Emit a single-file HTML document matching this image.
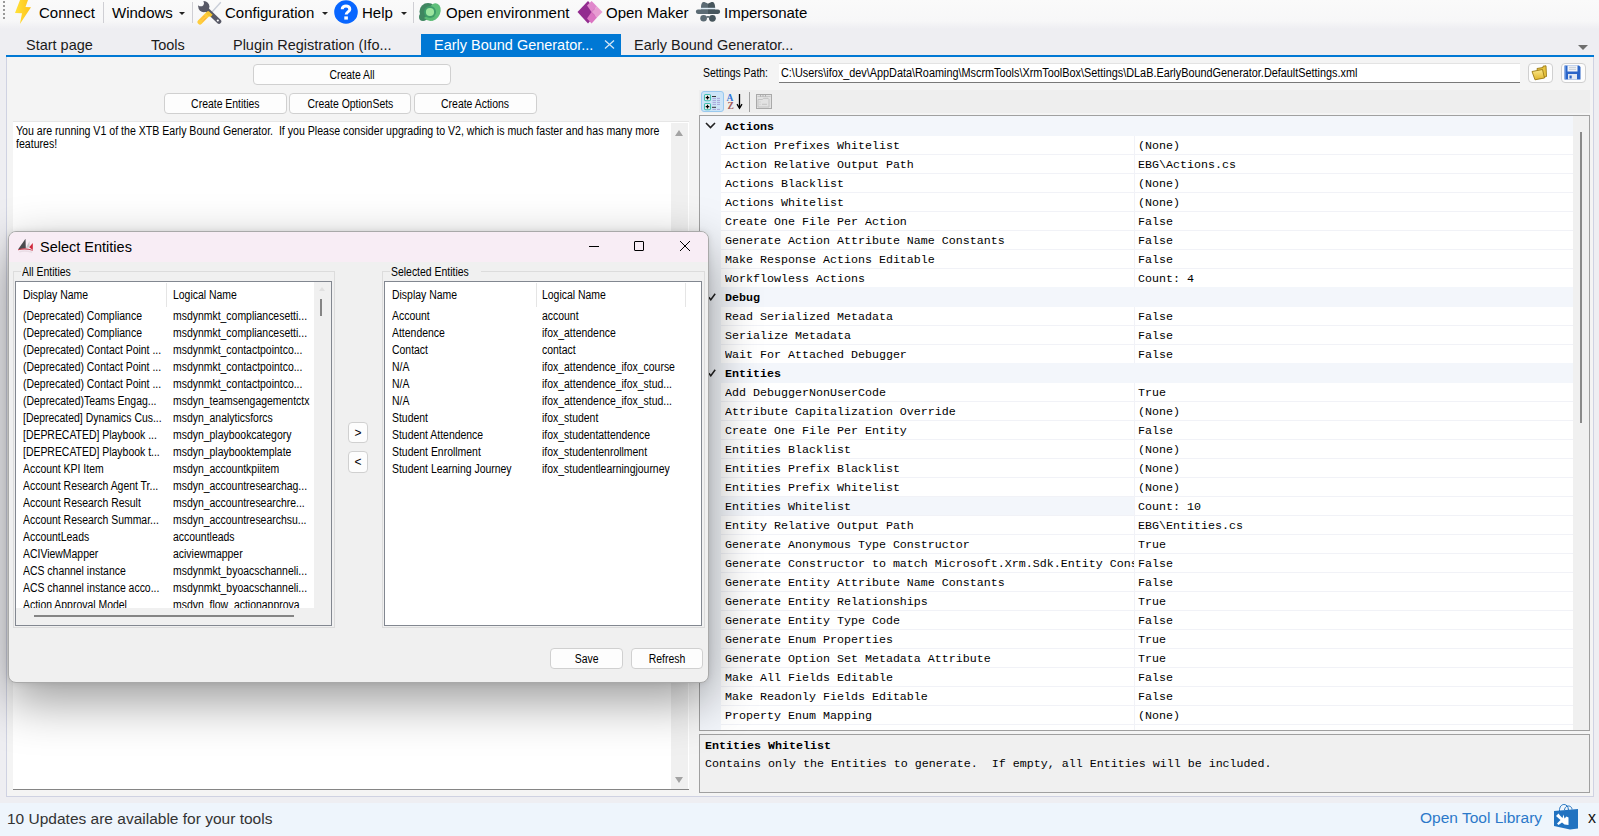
<!DOCTYPE html>
<html><head><meta charset="utf-8"><title>XrmToolBox</title>
<style>
*{box-sizing:border-box;margin:0;padding:0}
html,body{width:1599px;height:836px;overflow:hidden;background:#eeeef2;font-family:"Liberation Sans",sans-serif;color:#000;position:relative}
.abs{position:absolute}
#toolbar{left:0;top:0;width:1599px;height:29px;background:linear-gradient(#fafafa 0,#f7f7f8 72%,#eeeef2 100%)}
.tb{position:absolute;top:3px;font-size:15px;line-height:20px;color:#000;white-space:nowrap}
.sep{position:absolute;top:2px;width:1px;height:21px;background:#cfcfd4}
.dd{position:absolute;top:12px;width:0;height:0;border-left:3.5px solid transparent;border-right:3.5px solid transparent;border-top:3.5px solid #222}
#tabs{left:0;top:27px;width:1599px;height:28px;background:transparent}
.tab{position:absolute;top:8px;font-size:15px;line-height:20px;white-space:nowrap;color:#1a1a1a}
#blue{left:6px;top:55px;width:1588px;height:2px;background:#0078d4}
#panel{left:6px;top:57px;width:1588px;height:740px;background:#f4f4f4;border-left:1px solid #cfd2e2;border-right:1px solid #cfd2e2;border-bottom:1px solid #cfd2e2}
#status{left:0;top:803px;width:1599px;height:33px;background:#eef5fc}
.btn{position:absolute;padding-top:1px;background:#fdfdfd;border:1px solid #d0d0d0;border-radius:4px;font-size:12px;text-align:center;color:#000;white-space:nowrap}
.mono{font-family:"Liberation Mono",monospace}
#tbox{left:13px;top:121px;width:676px;height:669px;background:#fff;border-top:1px solid #e6e6e6;border-bottom:1px solid #858585}
#tbox .txt{position:absolute;left:3px;top:3px;width:745px;font-size:12px;transform:scaleX(.883);transform-origin:0 0;line-height:13px;color:#000}
#tscroll{left:658px;top:1px;width:17px;height:666px;background:#f0f0f0}
.tri-up{position:absolute;width:0;height:0;border-left:4px solid transparent;border-right:4px solid transparent;border-bottom:6px solid #a3a3a3}
.tri-dn{position:absolute;width:0;height:0;border-left:4px solid transparent;border-right:4px solid transparent;border-top:6px solid #a3a3a3}
#grid{left:699px;top:115px;width:891px;height:616px;background:#fff;border:1px solid #a0a0a0;overflow:hidden;font-family:"Liberation Mono",monospace;font-size:11.67px}
#gutter{left:0;top:0;width:21px;height:614px;background:#f3f6fb}
.gcat{left:0;width:873px;height:19px;background:#f3f6fb}
.gct{position:absolute;left:25px;top:1px;line-height:20px;font-weight:bold;white-space:nowrap}
.grow{left:21px;width:852px;height:19px;background:#fff;border-bottom:1px solid #f1f2f7}
.grow .gn{position:absolute;left:4px;top:0;line-height:20px;white-space:nowrap;width:409px;overflow:hidden}
.grow .gv{position:absolute;left:413px;top:0;height:18px;padding-left:3px;line-height:20px;white-space:nowrap;border-left:1px solid #f1f2f7}
#gscroll{left:873px;top:0;width:17px;height:614px;background:#f0f0f0}
#gthumb{left:7px;top:16px;width:2px;height:291px;background:#8a8a8a}
#desc{left:699px;top:734px;width:891px;height:59px;background:#f0f0f0;border:1px solid #a0a0a0;font-family:"Liberation Mono",monospace;font-size:11.67px}
.lv{font-size:12px}
.lhdr span{line-height:15px;white-space:nowrap}
.lrow{left:0;width:316px;height:17px;line-height:17px;white-space:nowrap}
.lrow .c1{position:absolute;left:7px;top:0}
.lrow .c2{position:absolute;top:0}

.n{display:inline-block;transform:scaleX(.87);transform-origin:0 50%;white-space:nowrap}
.nc{display:inline-block;transform:scaleX(.87);transform-origin:50% 50%;white-space:nowrap}
.lrow .c1,.lrow .c2,.lhdr span{transform:scaleX(.87);transform-origin:0 50%}
.tab{transform:scaleX(.965);transform-origin:0 50%}

.grow.sel{background:linear-gradient(90deg,#f3f6fb 0,#f3f6fb 413px,#fff 413px)}

</style></head><body>

<div id="toolbar" class="abs">
  <div class="abs" style="left:3px;top:1px;width:2px;height:19px;background:repeating-linear-gradient(#999 0 2px,transparent 2px 4px)"></div>
  <svg class="abs" style="left:14px;top:0" width="18" height="25" viewBox="14 0 18 25"><defs><linearGradient id="lg1" x1="0" x2="1"><stop offset="0" stop-color="#ffe23a"/><stop offset="1" stop-color="#ffc21a"/></linearGradient></defs><path d="M20 0 L28 0 L25.5 7 L31 7.3 L19.9 24 L22 13.3 L15 13 Z" fill="url(#lg1)"/></svg>
  <div class="tb" style="left:39px">Connect</div>
  <div class="sep" style="left:103px"></div>
  <div class="tb" style="left:112px">Windows</div>
  <div class="dd" style="left:179px"></div>
  <div class="sep" style="left:192px"></div>
  <svg class="abs" style="left:196px;top:0" width="26" height="25" viewBox="196 0 26 25">
    <path d="M212 12 L220.8 2.3" stroke="#c9ced8" stroke-width="1.4"/>
    <path d="M206 9 L219 21.5" stroke="#575866" stroke-width="4.6" stroke-linecap="round"/>
    <circle cx="203.8" cy="6.6" r="5.6" fill="#575866"/>
    <circle cx="200.8" cy="3.2" r="3.1" fill="#fafafb"/>
    <path d="M197 0 L203.5 0 L201 3 Z" fill="#fafafb"/>
    <circle cx="217.8" cy="20.5" r="1.1" fill="#fff"/>
    <path d="M200 22 L208 14" stroke="#ffcd3c" stroke-width="5" stroke-linecap="round"/>
    <path d="M207.5 12.5 L211.5 16" stroke="#f3c430" stroke-width="3.4"/>
    <path d="M201 19.5 L205 15.5 M202.8 21.3 L206.8 17.3" stroke="#ff8a45" stroke-width="0.9" stroke-dasharray="1 0.8"/>
  </svg>
  <div class="tb" style="left:225px">Configuration</div>
  <div class="dd" style="left:322px"></div>
  <svg class="abs" style="left:334px;top:0" width="24" height="24" viewBox="0 0 24 24"><circle cx="12" cy="12" r="11.8" fill="#0866ff"/><path d="M8.2 9.2 C8.2 4.8 15.8 4.8 15.8 9.2 C15.8 11.8 12.2 12 12.2 14.6" fill="none" stroke="#fff" stroke-width="3"/><rect x="10.3" y="16.4" width="3.6" height="3.2" fill="#fff"/></svg>
  <div class="tb" style="left:362px">Help</div>
  <div class="dd" style="left:401px"></div>
  <div class="sep" style="left:413px"></div>
  <svg class="abs" style="left:416px;top:0" width="28" height="24" viewBox="416 0 28 24"><circle cx="428" cy="11.5" r="8.5" fill="#3f8660"/><circle cx="423" cy="17" r="4" fill="#3f8660"/><ellipse cx="434" cy="12" rx="6.3" ry="9" transform="rotate(22 434 12)" fill="#5fbf7a"/><path d="M424 18 Q428 22 433 20.5 L436 16 L428 15 Z" fill="#5aba74"/><circle cx="430" cy="12" r="6" fill="#3e9d69"/><circle cx="430" cy="12" r="4.1" fill="#9de69f"/></svg>
  <div class="tb" style="left:446px">Open environment</div>
  <svg class="abs" style="left:576px;top:0" width="28" height="25" viewBox="576 0 28 25"><path d="M588 1 L577.5 12 L588 23.5 L598 12 Z" fill="#922c8f"/><path d="M587 5.5 L591.6 1 L597 6.5 L591.5 12 Z" fill="#e088cc"/><path d="M597 6.5 L602.5 12 L597 17.5 L591.5 12 Z" fill="#e89cd2"/><path d="M591.5 12 L597 17.5 L591.6 23.5 L587 18.5 Z" fill="#db74c2"/></svg>
  <div class="tb" style="left:606px">Open Maker</div>
  <svg class="abs" style="left:694px;top:0" width="28" height="24" viewBox="694 0 28 24"><defs><linearGradient id="spy" x1="0" x2="1"><stop offset="0.5" stop-color="#5b6b74"/><stop offset="0.5" stop-color="#47565d"/></linearGradient></defs><path d="M701 8 C701 2 703 1.8 705 2.2 C706.5 2.6 707.3 3.6 708 3.6 C708.7 3.6 709.5 2.6 711 2.2 C713 1.8 715 2 715.2 8 Z" fill="url(#spy)"/><rect x="700.6" y="7.8" width="14.8" height="1.8" fill="#dcebf6"/><path d="M698 9.6 L701 9.6 L701 9.3 L715 9.3 L715 9.6 L718 9.6 A2.1 2.1 0 0 1 718 13.9 L698 13.9 A2.1 2.1 0 0 1 698 9.6 Z" fill="url(#spy)"/><circle cx="703.6" cy="18.3" r="3.3" fill="#5b6b74"/><circle cx="712.4" cy="18.3" r="3.4" fill="#47565d"/><path d="M706.5 17.3 Q708 16.3 709.5 17.3" stroke="#505f66" stroke-width="1.4" fill="none"/></svg>
  <div class="tb" style="left:724px">Impersonate</div>
</div>
<div id="tabs" class="abs">
  <div class="tab" style="left:26px">Start page</div>
  <div class="tab" style="left:151px">Tools</div>
  <div class="tab" style="left:233px">Plugin Registration (Ifo...</div>
  <div class="abs" style="left:421px;top:7px;width:200px;height:21px;background:#0078d4"></div>
  <div class="tab" style="left:434px;color:#fff">Early Bound Generator...</div>
  <svg class="abs" style="left:604px;top:13px" width="11" height="9" viewBox="0 0 11 9"><path d="M1 0.5 L10 8.5 M10 0.5 L1 8.5" stroke="#d4e6f6" stroke-width="1.3"/></svg>
  <div class="tab" style="left:634px">Early Bound Generator...</div>
  <div class="abs" style="left:1578px;top:18px;width:0;height:0;border-left:5px solid transparent;border-right:5px solid transparent;border-top:5px solid #6e6e6e"></div>
</div>
<div id="blue" class="abs"></div>
<div id="panel" class="abs"></div>
<div class="btn" style="left:253px;top:64px;width:198px;height:21px;line-height:19px"><span class="nc">Create All</span></div>
<div class="btn" style="left:164px;top:93px;width:123px;height:21px;line-height:19px"><span class="nc">Create Entities</span></div>
<div class="btn" style="left:289px;top:93px;width:122px;height:21px;line-height:19px"><span class="nc">Create OptionSets</span></div>
<div class="btn" style="left:414px;top:93px;width:123px;height:21px;line-height:19px"><span class="nc">Create Actions</span></div>
<div id="tbox" class="abs">
  <div class="txt">You are running V1 of the XTB Early Bound Generator.&nbsp; If you Please consider upgrading to V2, which is much faster and has many more features!</div>
  <div id="tscroll" class="abs"><div class="tri-up" style="left:4px;top:7px"></div><div class="tri-dn" style="left:4px;top:654px"></div></div>
</div>
<div class="abs n" style="left:703px;top:66px;font-size:12px;line-height:15px">Settings Path:</div>
<div class="abs" style="left:779px;top:63px;width:741px;height:20px;background:#fff;border-top:1px solid #e3e3e3;border-bottom:1px solid #7a7a7a;font-size:12px;line-height:18px;padding-left:2px;white-space:nowrap;overflow:hidden"><span class="n" style="transform:scaleX(.905)">C:\Users\ifox_dev\AppData\Roaming\MscrmTools\XrmToolBox\Settings\DLaB.EarlyBoundGenerator.DefaultSettings.xml</span></div>
<div class="btn" style="left:1528px;top:63px;width:25px;height:20px"></div>
<svg class="abs" style="left:1531px;top:65px" width="18" height="16" viewBox="0 0 18 16"><defs><linearGradient id="fg" x1="0" y1="0" x2="0" y2="1"><stop offset="0" stop-color="#fbe88a"/><stop offset="1" stop-color="#e0b52a"/></linearGradient></defs><path d="M6 3.5 L12 2.5 L12 1.2 L15 0.8 L15.5 11.5 L8 13.5 Z" fill="#e8c440" stroke="#9c7a14" stroke-width="0.9"/><path d="M1 6.5 L11.5 4.5 L13.5 13 L4 14.8 Z" fill="url(#fg)" stroke="#9c7a14" stroke-width="0.9"/></svg>
<div class="btn" style="left:1561px;top:63px;width:25px;height:20px"></div>
<svg class="abs" style="left:1564px;top:65px" width="17" height="15" viewBox="0 0 17 15"><path d="M0.5 0.5 H15 L16.5 2 V14.5 H0.5 Z" fill="#2a64c8"/><path d="M1.5 1 V14" stroke="#5a8ee0" stroke-width="1"/><rect x="3.5" y="0.5" width="10" height="6" fill="#f2f4f8"/><path d="M5 2.3H12M5 4.3H12" stroke="#b8c0cc" stroke-width="0.8"/><rect x="4" y="9" width="9" height="5.5" fill="#e2e8f2"/><rect x="5.5" y="10.5" width="2.2" height="3" fill="#2a64c8"/></svg>
<div class="abs" style="left:699px;top:90px;width:891px;height:23px;background:#eeeeee"></div>
<div class="abs" style="left:701px;top:91px;width:23px;height:21px;background:#cce4f7;border:1px solid #99c9ef;border-radius:3px"></div>
<svg class="abs" style="left:703px;top:93px" width="20" height="18" viewBox="703 93 20 18">
  <rect x="704.5" y="94.5" width="6" height="6.2" rx="1.2" fill="#f4f4f4" stroke="#43bfae" stroke-width="1.1"/><path d="M707.5 95.8V99.4M705.7 97.6H709.3" stroke="#000" stroke-width="1.3"/>
  <rect x="704.5" y="103.5" width="6" height="6.2" rx="1.2" fill="#f4f4f4" stroke="#43bfae" stroke-width="1.1"/><path d="M707.5 104.8V108.4M705.7 106.6H709.3" stroke="#000" stroke-width="1.3"/>
  <path d="M712 96.5H716M712 107.3H716" stroke="#333" stroke-width="1"/>
  <path d="M712.5 98.4H716M717 98.4H720M712.5 100.4H716M717 100.4H720M712.5 102.4H716M717 102.4H720M712.5 104.4H716M717 104.4H720M712.5 109.4H716M717 109.4H720" stroke="#9a8cd0" stroke-width="0.7"/>
</svg>
<svg class="abs" style="left:726px;top:93px" width="20" height="18" viewBox="726 93 20 18"><text x="726.6" y="101.2" font-family="Liberation Serif" font-weight="bold" font-size="9.5" fill="#2e74d8">A</text><text x="727.4" y="109.4" font-family="Liberation Serif" font-weight="bold" font-size="9.5" fill="#a05a5a">Z</text><path d="M739.5 94V108" stroke="#000" stroke-width="1.3"/><path d="M737 104.2L739.5 108.2L742 104.2" stroke="#000" stroke-width="1.3" fill="none"/></svg>
<div class="abs" style="left:749px;top:92px;width:1px;height:20px;background:#a0a0a0"></div>
<svg class="abs" style="left:755px;top:93px" width="18" height="17" viewBox="755 93 18 17"><rect x="756.5" y="94.5" width="15" height="14" fill="#e2e2e2" stroke="#a9a9a9"/><path d="M757.5 96.5H770.5" stroke="#c8c8c8"/><path d="M760 95.8H761M762.5 95.8H763.5M765 95.8H766" stroke="#888" stroke-width="0.8"/><path d="M758 107V99.5H762.5L763.5 98.3H768L769 99.5V107Z" fill="none" stroke="#c4c4c4"/><path d="M759.5 102H760.5M759.5 104.3H760.5M762 104.3H767" stroke="#bdbdbd" stroke-width="0.8"/></svg>

<div id="grid" class="abs">
<div id="gutter" class="abs"></div>
<div class="gcat abs" style="top:0px;height:20px"><svg class="abs" style="left:5px;top:6px" width="11" height="7" viewBox="0 0 11 7"><path d="M1 1 L5.5 5.5 L10 1" fill="none" stroke="#222" stroke-width="1.6"/></svg><span class="gct">Actions</span></div>
<div class="grow abs" style="top:20px"><span class="gn">Action Prefixes Whitelist</span><span class="gv">(None)</span></div>
<div class="grow abs" style="top:39px"><span class="gn">Action Relative Output Path</span><span class="gv">EBG\Actions.cs</span></div>
<div class="grow abs" style="top:58px"><span class="gn">Actions Blacklist</span><span class="gv">(None)</span></div>
<div class="grow abs" style="top:77px"><span class="gn">Actions Whitelist</span><span class="gv">(None)</span></div>
<div class="grow abs" style="top:96px"><span class="gn">Create One File Per Action</span><span class="gv">False</span></div>
<div class="grow abs" style="top:115px"><span class="gn">Generate Action Attribute Name Constants</span><span class="gv">False</span></div>
<div class="grow abs" style="top:134px"><span class="gn">Make Response Actions Editable</span><span class="gv">False</span></div>
<div class="grow abs" style="top:153px"><span class="gn">Workflowless Actions</span><span class="gv">Count: 4</span></div>
<div class="gcat abs" style="top:171px;height:20px"><svg class="abs" style="left:8px;top:6px" width="8" height="8" viewBox="0 0 8 8"><path d="M0.8 4.2 L2.8 6.8 L7.2 0.8" fill="none" stroke="#222" stroke-width="1.5"/></svg><span class="gct">Debug</span></div>
<div class="grow abs" style="top:191px"><span class="gn">Read Serialized Metadata</span><span class="gv">False</span></div>
<div class="grow abs" style="top:210px"><span class="gn">Serialize Metadata</span><span class="gv">False</span></div>
<div class="grow abs" style="top:229px"><span class="gn">Wait For Attached Debugger</span><span class="gv">False</span></div>
<div class="gcat abs" style="top:247px;height:20px"><svg class="abs" style="left:8px;top:6px" width="8" height="8" viewBox="0 0 8 8"><path d="M0.8 4.2 L2.8 6.8 L7.2 0.8" fill="none" stroke="#222" stroke-width="1.5"/></svg><span class="gct">Entities</span></div>
<div class="grow abs" style="top:267px"><span class="gn">Add DebuggerNonUserCode</span><span class="gv">True</span></div>
<div class="grow abs" style="top:286px"><span class="gn">Attribute Capitalization Override</span><span class="gv">(None)</span></div>
<div class="grow abs" style="top:305px"><span class="gn">Create One File Per Entity</span><span class="gv">False</span></div>
<div class="grow abs" style="top:324px"><span class="gn">Entities Blacklist</span><span class="gv">(None)</span></div>
<div class="grow abs" style="top:343px"><span class="gn">Entities Prefix Blacklist</span><span class="gv">(None)</span></div>
<div class="grow abs" style="top:362px"><span class="gn">Entities Prefix Whitelist</span><span class="gv">(None)</span></div>
<div class="grow sel abs" style="top:381px"><span class="gn">Entities Whitelist</span><span class="gv">Count: 10</span></div>
<div class="grow abs" style="top:400px"><span class="gn">Entity Relative Output Path</span><span class="gv">EBG\Entities.cs</span></div>
<div class="grow abs" style="top:419px"><span class="gn">Generate Anonymous Type Constructor</span><span class="gv">True</span></div>
<div class="grow abs" style="top:438px"><span class="gn">Generate Constructor to match Microsoft.Xrm.Sdk.Entity Constructor</span><span class="gv">False</span></div>
<div class="grow abs" style="top:457px"><span class="gn">Generate Entity Attribute Name Constants</span><span class="gv">False</span></div>
<div class="grow abs" style="top:476px"><span class="gn">Generate Entity Relationships</span><span class="gv">True</span></div>
<div class="grow abs" style="top:495px"><span class="gn">Generate Entity Type Code</span><span class="gv">False</span></div>
<div class="grow abs" style="top:514px"><span class="gn">Generate Enum Properties</span><span class="gv">True</span></div>
<div class="grow abs" style="top:533px"><span class="gn">Generate Option Set Metadata Attribute</span><span class="gv">True</span></div>
<div class="grow abs" style="top:552px"><span class="gn">Make All Fields Editable</span><span class="gv">False</span></div>
<div class="grow abs" style="top:571px"><span class="gn">Make Readonly Fields Editable</span><span class="gv">False</span></div>
<div class="grow abs" style="top:590px"><span class="gn">Property Enum Mapping</span><span class="gv">(None)</span></div>
<div class="grow abs" style="top:609px"><span class="gn">Replace Option Set Properties with Enum</span><span class="gv">True</span></div>
<div id="gscroll" class="abs"><div id="gthumb" class="abs"></div></div>
</div>
<div id="desc" class="abs">
  <div class="abs" style="left:5px;top:2px;font-weight:bold;line-height:18px">Entities Whitelist</div>
  <div class="abs" style="left:5px;top:20px;line-height:18px;white-space:pre">Contains only the Entities to generate.  If empty, all Entities will be included.</div>
</div>
<div id="status" class="abs">
  <div class="abs" style="left:7px;top:6px;font-size:15.5px;line-height:20px;color:#333">10 Updates are available for your tools</div>
  <div class="abs" style="left:1420px;top:5px;font-size:15.5px;line-height:20px;color:#2b79c9">Open Tool Library</div>
  <svg class="abs" style="left:1553px;top:0" width="26" height="30" viewBox="1553 803 26 30"><path d="M1559.5 811 C1559 803 1568 802 1568.5 810 M1564.5 810 C1565 804.5 1572 805 1572 809.5" fill="none" stroke="#2172c0" stroke-width="1"/><path d="M1554 811 L1578 809 L1578 828.5 L1570 829.5 L1554 826 Z" fill="#2172c0"/><path d="M1556 816 L1558.5 813.5 L1560 815.5 L1562.5 818 L1563.5 814.5 L1564.5 818.5 L1566.5 816.5 L1568.5 817.5 L1568.5 825 L1564.5 824.5 L1562 822.5 L1558.5 825 L1557 823.5 L1560.5 820 Z" fill="#fff"/></svg>
  <div class="abs" style="left:1588px;top:5px;font-size:16px;line-height:20px;color:#111">x</div>
</div>

<div id="dlg" class="abs" style="left:8px;top:231px;width:701px;height:452px;background:#f0f0f0;border:1px solid #a9a9a9;border-radius:8px;box-shadow:0 18px 50px rgba(0,0,0,0.40),0 0 6px rgba(0,0,0,0.10);overflow:hidden">
  <div class="abs" style="left:0;top:0;width:699px;height:30px;background:#f8edf5"></div>
  <svg class="abs" style="left:8px;top:6px" width="17" height="17" viewBox="0 0 17 17"><path d="M1 11.5 L8.5 0.7 L8.8 10.2 Z" fill="#4a4a4e"/><path d="M8.8 10.2 L12.5 3 L12.5 9.3 Z" fill="#c9c9cc"/><path d="M12.2 9.3 L15.8 4.9 L15.8 12 Z" fill="#d0283c"/><path d="M1 11.5 Q8 9 15.8 12 L15.8 12.8 Q8 10.3 1 12.3 Z" fill="#c23848"/><path d="M2 13 Q8 11.5 15.5 13.5 L15 15 Q8 13 2.5 14.5Z" fill="#e2d6de" opacity=".7"/></svg>
  <div class="abs" style="left:31px;top:5px;font-size:14.5px;line-height:20px;color:#000">Select Entities</div>
  <div class="abs" style="left:580px;top:14px;width:10px;height:1px;background:#000"></div>
  <div class="abs" style="left:625px;top:9px;width:10px;height:10px;border:1px solid #000;border-radius:1px"></div>
  <svg class="abs" style="left:671px;top:9px" width="10" height="10" viewBox="0 0 10 10"><path d="M0 0L10 10M10 0L0 10" stroke="#000" stroke-width="1"/></svg>
  <div class="abs" style="left:4px;top:39px;width:322px;height:357px;border:1px solid #dcdcdc"></div>
  <div class="abs" style="left:12px;top:33px;padding:0 1px;background:#f0f0f0;font-size:12px;line-height:15px"><span class="n">All Entities</span></div>
  <div class="abs lv" style="left:6px;top:49px;width:317px;height:345px;background:#fff;border:1px solid #828790">
    <div class="lhdr abs" style="left:0;top:1px;width:300px;height:25px"><span class="abs" style="left:7px;top:5px">Display Name</span><div class="abs" style="left:150px;top:0;width:1px;height:24px;background:#e5e5e5"></div><span class="abs" style="left:157px;top:5px">Logical Name</span></div>
    <div class="abs" style="left:0;top:0;width:298px;height:326px;overflow:hidden">
<div class="lrow abs" style="top:26px"><span class="c1">(Deprecated) Compliance</span><span class="c2" style="left:157px">msdynmkt_compliancesetti...</span></div>
<div class="lrow abs" style="top:43px"><span class="c1">(Deprecated) Compliance</span><span class="c2" style="left:157px">msdynmkt_compliancesetti...</span></div>
<div class="lrow abs" style="top:60px"><span class="c1">(Deprecated) Contact Point ...</span><span class="c2" style="left:157px">msdynmkt_contactpointco...</span></div>
<div class="lrow abs" style="top:77px"><span class="c1">(Deprecated) Contact Point ...</span><span class="c2" style="left:157px">msdynmkt_contactpointco...</span></div>
<div class="lrow abs" style="top:94px"><span class="c1">(Deprecated) Contact Point ...</span><span class="c2" style="left:157px">msdynmkt_contactpointco...</span></div>
<div class="lrow abs" style="top:111px"><span class="c1">(Deprecated)Teams Engag...</span><span class="c2" style="left:157px">msdyn_teamsengagementctx</span></div>
<div class="lrow abs" style="top:128px"><span class="c1">[Deprecated] Dynamics Cus...</span><span class="c2" style="left:157px">msdyn_analyticsforcs</span></div>
<div class="lrow abs" style="top:145px"><span class="c1">[DEPRECATED] Playbook ...</span><span class="c2" style="left:157px">msdyn_playbookcategory</span></div>
<div class="lrow abs" style="top:162px"><span class="c1">[DEPRECATED] Playbook t...</span><span class="c2" style="left:157px">msdyn_playbooktemplate</span></div>
<div class="lrow abs" style="top:179px"><span class="c1">Account KPI Item</span><span class="c2" style="left:157px">msdyn_accountkpiitem</span></div>
<div class="lrow abs" style="top:196px"><span class="c1">Account Research Agent Tr...</span><span class="c2" style="left:157px">msdyn_accountresearchag...</span></div>
<div class="lrow abs" style="top:213px"><span class="c1">Account Research Result</span><span class="c2" style="left:157px">msdyn_accountresearchre...</span></div>
<div class="lrow abs" style="top:230px"><span class="c1">Account Research Summar...</span><span class="c2" style="left:157px">msdyn_accountresearchsu...</span></div>
<div class="lrow abs" style="top:247px"><span class="c1">AccountLeads</span><span class="c2" style="left:157px">accountleads</span></div>
<div class="lrow abs" style="top:264px"><span class="c1">ACIViewMapper</span><span class="c2" style="left:157px">aciviewmapper</span></div>
<div class="lrow abs" style="top:281px"><span class="c1">ACS channel instance</span><span class="c2" style="left:157px">msdynmkt_byoacschanneli...</span></div>
<div class="lrow abs" style="top:298px"><span class="c1">ACS channel instance acco...</span><span class="c2" style="left:157px">msdynmkt_byoacschanneli...</span></div>
<div class="lrow abs" style="top:315px"><span class="c1">Action Approval Model</span><span class="c2" style="left:157px">msdyn_flow_actionapprova</span></div>
    </div>
    <div class="abs" style="left:298px;top:0;width:17px;height:326px;background:#f0f0f0"><div class="abs" style="left:5px;top:5px;width:0;height:0;border-left:3px solid transparent;border-right:3px solid transparent;border-bottom:4px solid #e0e0e0"></div><div class="abs" style="left:6px;top:17px;width:2px;height:17px;background:#858585"></div></div>
    <div class="abs" style="left:0;top:326px;width:315px;height:17px;background:#f0f0f0"><div class="abs" style="left:18px;top:7px;width:260px;height:2px;background:#858585"></div></div>
  </div>
  <div class="btn" style="left:339px;top:190px;width:20px;height:21px;line-height:18px;font-size:12px">&gt;</div>
  <div class="btn" style="left:339px;top:219px;width:20px;height:22px;line-height:18px;font-size:12px">&lt;</div>
  <div class="abs" style="left:373px;top:39px;width:323px;height:357px;border:1px solid #dcdcdc"></div>
  <div class="abs" style="left:381px;top:33px;padding:0 1px;background:#f0f0f0;font-size:12px;line-height:15px"><span class="n">Selected Entities</span></div>
  <div class="abs lv" style="left:375px;top:49px;width:318px;height:345px;background:#fff;border:1px solid #828790">
    <div class="lhdr abs" style="left:0;top:1px;width:316px;height:25px"><span class="abs" style="left:7px;top:5px">Display Name</span><div class="abs" style="left:151px;top:0;width:1px;height:24px;background:#e5e5e5"></div><span class="abs" style="left:157px;top:5px">Logical Name</span><div class="abs" style="left:300px;top:0;width:1px;height:24px;background:#e5e5e5"></div></div>
<div class="lrow abs" style="top:26px"><span class="c1">Account</span><span class="c2" style="left:157px">account</span></div>
<div class="lrow abs" style="top:43px"><span class="c1">Attendence</span><span class="c2" style="left:157px">ifox_attendence</span></div>
<div class="lrow abs" style="top:60px"><span class="c1">Contact</span><span class="c2" style="left:157px">contact</span></div>
<div class="lrow abs" style="top:77px"><span class="c1">N/A</span><span class="c2" style="left:157px">ifox_attendence_ifox_course</span></div>
<div class="lrow abs" style="top:94px"><span class="c1">N/A</span><span class="c2" style="left:157px">ifox_attendence_ifox_stud...</span></div>
<div class="lrow abs" style="top:111px"><span class="c1">N/A</span><span class="c2" style="left:157px">ifox_attendence_ifox_stud...</span></div>
<div class="lrow abs" style="top:128px"><span class="c1">Student</span><span class="c2" style="left:157px">ifox_student</span></div>
<div class="lrow abs" style="top:145px"><span class="c1">Student Attendence</span><span class="c2" style="left:157px">ifox_studentattendence</span></div>
<div class="lrow abs" style="top:162px"><span class="c1">Student Enrollment</span><span class="c2" style="left:157px">ifox_studentenrollment</span></div>
<div class="lrow abs" style="top:179px"><span class="c1">Student Learning Journey</span><span class="c2" style="left:157px">ifox_studentlearningjourney</span></div>
  </div>
  <div class="btn" style="left:541px;top:416px;width:73px;height:21px;line-height:19px"><span class="nc">Save</span></div>
  <div class="btn" style="left:622px;top:416px;width:72px;height:21px;line-height:19px"><span class="nc">Refresh</span></div>
</div>

</body></html>
